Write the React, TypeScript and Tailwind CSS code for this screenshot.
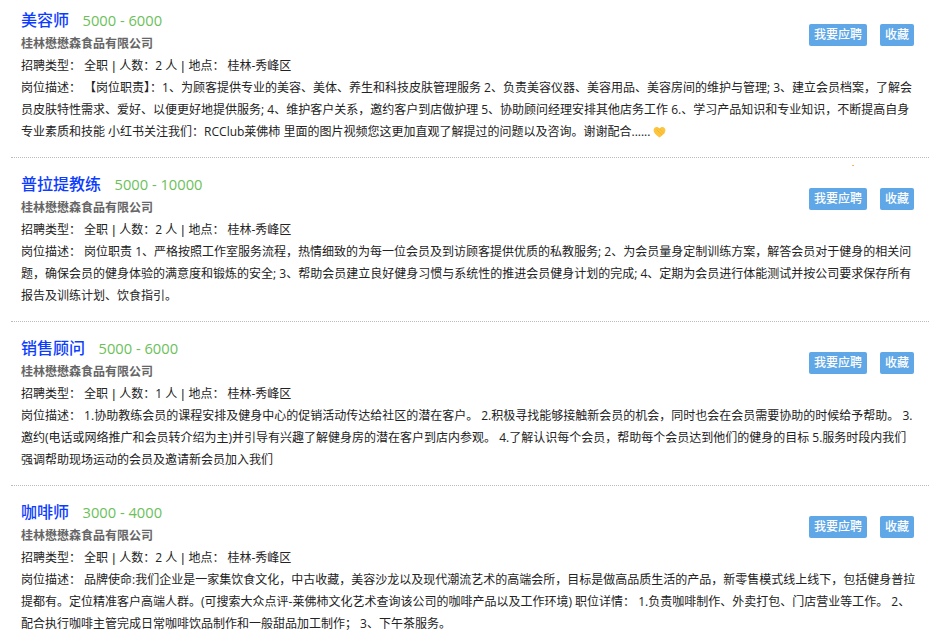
const jobs = [
  {
    title: "美容师",
    salary: "5000 - 6000",
    count: "2",
    lines: [
      "岗位描述： 【岗位职责】：1、为顾客提供专业的美容、美体、养生和科技皮肤管理服务 2、负责美容仪器、美容用品、美容房间的维护与管理; 3、建立会员档案，了解会",
      "员皮肤特性需求、爱好、以便更好地提供服务; 4、维护客户关系，邀约客户到店做护理 5、协助顾问经理安排其他店务工作 6.、学习产品知识和专业知识，不断提高自身",
      "专业素质和技能 小红书关注我们：RCClub莱佛柿 里面的图片视频您这更加直观了解提过的问题以及咨询。谢谢配合......",
    ],
    heart: true,
  },
  {
    title: "普拉提教练",
    salary: "5000 - 10000",
    count: "2",
    lines: [
      "岗位描述： 岗位职责 1、严格按照工作室服务流程，热情细致的为每一位会员及到访顾客提供优质的私教服务; 2、为会员量身定制训练方案，解答会员对于健身的相关问",
      "题，确保会员的健身体验的满意度和锻炼的安全; 3、帮助会员建立良好健身习惯与系统性的推进会员健身计划的完成; 4、定期为会员进行体能测试并按公司要求保存所有",
      "报告及训练计划、饮食指引。",
    ],
  },
  {
    title: "销售顾问",
    salary: "5000 - 6000",
    count: "1",
    lines: [
      "岗位描述： 1.协助教练会员的课程安排及健身中心的促销活动传达给社区的潜在客户。 2.积极寻找能够接触新会员的机会，同时也会在会员需要协助的时候给予帮助。 3.",
      "邀约(电话或网络推广和会员转介绍为主)并引导有兴趣了解健身房的潜在客户到店内参观。 4.了解认识每个会员，帮助每个会员达到他们的健身的目标 5.服务时段内我们",
      "强调帮助现场运动的会员及邀请新会员加入我们",
    ],
  },
  {
    title: "咖啡师",
    salary: "3000 - 4000",
    count: "2",
    lines: [
      "岗位描述： 品牌使命:我们企业是一家集饮食文化，中古收藏，美容沙龙以及现代潮流艺术的高端会所，目标是做高品质生活的产品，新零售模式线上线下，包括健身普拉",
      "提都有。定位精准客户高端人群。(可搜索大众点评-莱佛柿文化艺术查询该公司的咖啡产品以及工作环境) 职位详情： 1.负责咖啡制作、外卖打包、门店营业等工作。 2、",
      "配合执行咖啡主管完成日常咖啡饮品制作和一般甜品加工制作； 3、下午茶服务。",
    ],
  },
]

function Heart() {
  return (
    <svg width="13" height="12" viewBox="0 0 13 12" className="inline-block align-[-2px] ml-[3px]">
      <path d="M6.5 11.5C3 9 .6 7 .6 4.2.6 2.2 2 .9 3.6.9c1.3 0 2.3.6 2.9 1.6.6-1 1.6-1.600 2.900-1.600 1.600 0 3 1.300 3 3.300 0 2.800-2.400 4.800-5.900 7.300z" fill="#fcc53d" />
      <path d="M3.500 3.500 9 9M6 2.500 11 7.500" stroke="#f2ae2b" strokeWidth="0.8" fill="none" />
    </svg>
  )
}

function Sep() {
  return <span className="mx-[4px] font-['Liberation_Sans']">|</span>
}

export default function App() {
  return (
    <div
      className="w-[939px] h-[642px] overflow-hidden bg-white relative text-[12px] leading-[22px] text-[#222]"
      style={{ fontFamily: '"Open Sans", "Noto Sans CJK SC", sans-serif' }}
    >
      {/* stray mark near the second card */}
      <span className="absolute left-[852px] top-[165px] w-[2px] h-px bg-[#f5b45a]" />
      <div className="pl-[11px] pr-[10px]">
        {jobs.map((job, i) => (
          <div
            key={job.title}
            className={`h-[158px] mb-[6px] pl-[10px] pr-[15px] pt-[7px] flex justify-between ${
              i < jobs.length - 1 ? "border-b border-dotted border-[#bbb]" : ""
            }`}
          >
            <div className="w-[895px] shrink-0 -mr-[120px]">
              <div className="flex items-baseline h-[26px]">
                <span className="text-[16px] font-medium text-[#0b3cff] leading-[26px]">{job.title}</span>
                <span className="text-[14.7px] text-[#6cbf5a] ml-[13.5px] leading-[26px]">{job.salary}</span>
              </div>
              <div className="font-bold text-[#666] h-[22px]">桂林懋懋森食品有限公司</div>
              <div className="whitespace-pre">
                招聘类型： 全职<Sep />人数：{job.count} 人<Sep />地点： 桂林-秀峰区
              </div>
              {job.lines.map((line, j) => (
                <div key={j} className="whitespace-pre">
                  {line}
                  {job.heart && j === job.lines.length - 1 ? <Heart /> : null}
                </div>
              ))}
            </div>
            <div className="flex gap-[13px] pt-[17px] relative">
              <button className="h-[22px] w-[58px] rounded-[2px] bg-[#5fa7e6] text-white text-[12px] font-medium leading-[22px]">
                我要应聘
              </button>
              <button className="h-[22px] w-[34px] rounded-[2px] bg-[#5fa7e6] text-white text-[12px] font-medium leading-[22px]">
                收藏
              </button>
            </div>
          </div>
        ))}
      </div>
    </div>
  )
}
